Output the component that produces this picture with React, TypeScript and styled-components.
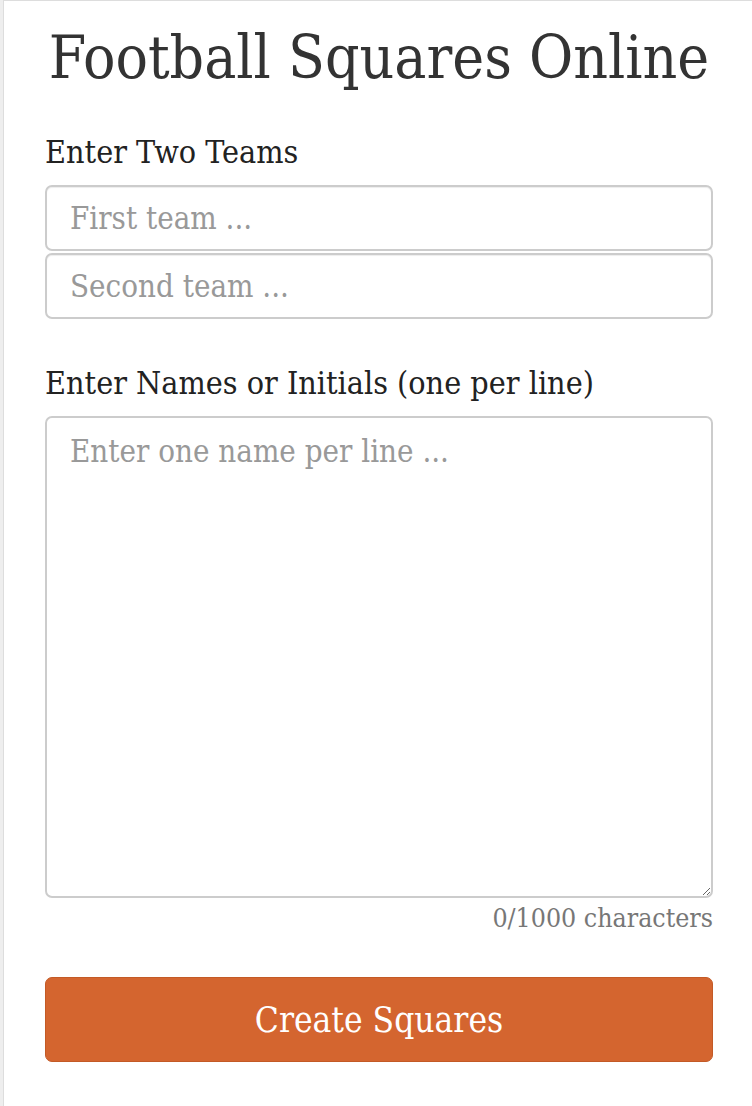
import styled, { createGlobalStyle } from "styled-components";

const GlobalStyle = createGlobalStyle`
  html, body {
    margin: 0;
    padding: 0;
    background: #eeeeee;
  }
  * {
    box-sizing: border-box;
  }
`;

const serif = `"DejaVu Serif Condensed", "DejaVu Serif", "Liberation Serif", serif`;

const Page = styled.div`
  margin-left: 3px;
  min-height: 1106px;
  background: #ffffff;
  border-top: 1px solid #dddddd;
  border-left: 1px solid #dddddd;
  padding: 16px 39px 0 41px;
  font-family: ${serif};
  font-stretch: condensed;
  color: #333333;
`;

const Title = styled.h1`
  margin: 0;
  text-align: center;
  white-space: nowrap;
  font-weight: 400;
  font-size: 60px;
  line-height: 80px;
  color: #333333;
`;

const Section = styled.div<{ $top: number }>`
  display: flex;
  flex-direction: column;
  margin-top: ${(p) => p.$top}px;
`;

const Label = styled.label`
  font-size: 32px;
  line-height: 40px;
  color: #222222;
  margin-bottom: 13px;
`;

const Field = styled.input`
  width: 100%;
  height: 66px;
  margin-bottom: 2px;
  padding: 0 23px;
  border: 2px solid #cccccc;
  border-radius: 7px;
  font-family: ${serif};
  font-stretch: condensed;
  font-size: 31px;
  color: #333333;
  background: #ffffff;
  box-shadow: inset 0 1px 1px rgba(0, 0, 0, 0.075);
  outline: none;
  &::placeholder {
    color: #999999;
  }
`;

const Area = styled.textarea`
  width: 100%;
  height: 482px;
  padding: 13px 23px;
  border: 2px solid #cccccc;
  border-radius: 7px;
  font-family: ${serif};
  font-stretch: condensed;
  font-size: 31px;
  line-height: 40px;
  color: #333333;
  resize: vertical;
  outline: none;
  &::placeholder {
    color: #999999;
  }
`;

const Counter = styled.div`
  margin-top: 5px;
  text-align: right;
  font-size: 26.5px;
  line-height: 30px;
  color: #777777;
`;

const Submit = styled.button`
  display: block;
  width: 100%;
  height: 85px;
  margin-top: 44px;
  border: 1px solid #c35a26;
  border-radius: 7px;
  background: #d4652f;
  color: #ffffff;
  font-family: ${serif};
  font-stretch: condensed;
  font-size: 35px;
  cursor: pointer;
`;

export default function App() {
  return (
    <>
      <GlobalStyle />
      <Page>
        <Title>Football Squares Online</Title>
        <Section $top={35}>
          <Label>Enter Two Teams</Label>
          <Field placeholder="First team ..." />
          <Field placeholder="Second team ..." />
        </Section>
        <Section $top={42}>
          <Label>Enter Names or Initials (one per line)</Label>
          <Area placeholder="Enter one name per line ..." />
          <Counter>0/1000 characters</Counter>
        </Section>
        <Submit>Create Squares</Submit>
      </Page>
    </>
  );
}
